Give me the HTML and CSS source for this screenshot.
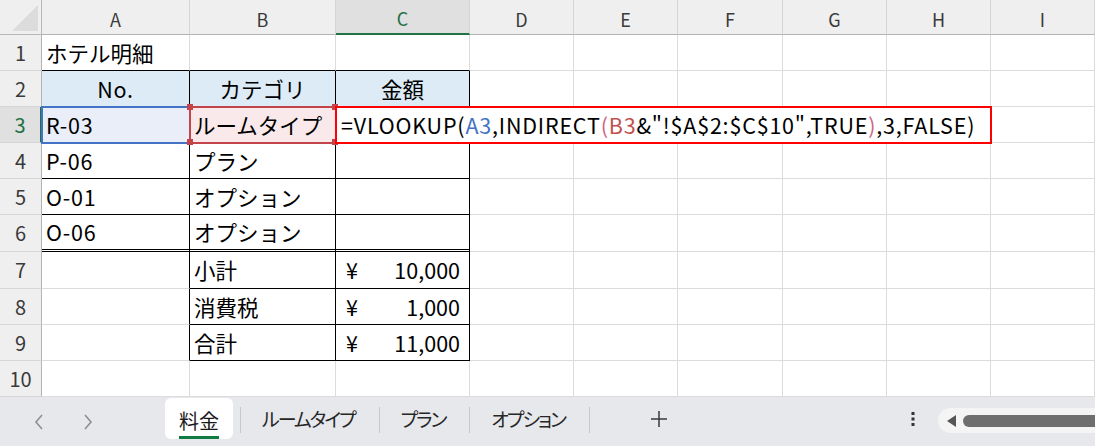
FILE: index.html
```html
<!DOCTYPE html>
<html lang="ja">
<head>
<meta charset="utf-8">
<link rel="stylesheet" href="styles.css">
</head>
<body>
<div class="sheet">
  <div class="corner"><svg width="41" height="34" viewBox="0 0 41 34"><polygon points="12,31 38,31 38,5" fill="#dcdcdc"/></svg></div>
  <div class="ch">A</div><div class="ch">B</div><div class="ch sel">C</div><div class="ch">D</div><div class="ch">E</div><div class="ch">F</div><div class="ch">G</div><div class="ch">H</div><div class="ch">I</div>

  <div class="rh">1</div>
  <div class="c bb">ホテル明細</div><div class="c bb"></div><div class="c bb"></div><div class="c"></div><div class="c"></div><div class="c"></div><div class="c"></div><div class="c"></div><div class="c"></div>

  <div class="rh">2</div>
  <div class="c hd br bb lat">No.</div><div class="c hd br bb">カテゴリ</div><div class="c hd br bb">金額</div><div class="c"></div><div class="c"></div><div class="c"></div><div class="c"></div><div class="c"></div><div class="c"></div>

  <div class="rh sel">3</div>
  <div class="c ref-a lat">R-03</div>
  <div class="c ref-b">ルームタイプ<span class="hdl tl"></span><span class="hdl tr"></span><span class="hdl bl"></span><span class="hdl br2"></span></div>
  <div class="c formula">=VLOOKUP(<span class="ra">A3</span>,INDIRECT<span class="p2">(</span><span class="rb">B3</span>&amp;"!$A$2:$C$10",TRUE<span class="p2">)</span>,3,FALSE)</div>
  <div class="c"></div>

  <div class="rh">4</div>
  <div class="c br bb lat">P-06</div><div class="c br bb">プラン</div><div class="c br bb"></div><div class="c"></div><div class="c"></div><div class="c"></div><div class="c"></div><div class="c"></div><div class="c"></div>

  <div class="rh">5</div>
  <div class="c br bb lat">O-01</div><div class="c br bb">オプション</div><div class="c br bb"></div><div class="c"></div><div class="c"></div><div class="c"></div><div class="c"></div><div class="c"></div><div class="c"></div>

  <div class="rh">6</div>
  <div class="c br dbl lat">O-06</div><div class="c br dbl">オプション</div><div class="c br dbl"></div><div class="c"></div><div class="c"></div><div class="c"></div><div class="c"></div><div class="c"></div><div class="c"></div>

  <div class="rh">7</div>
  <div class="c br"></div><div class="c br bb">小計</div><div class="c br bb money"><span>¥</span><span>10,000</span></div><div class="c"></div><div class="c"></div><div class="c"></div><div class="c"></div><div class="c"></div><div class="c"></div>

  <div class="rh">8</div>
  <div class="c br"></div><div class="c br bb">消費税</div><div class="c br bb money"><span>¥</span><span>1,000</span></div><div class="c"></div><div class="c"></div><div class="c"></div><div class="c"></div><div class="c"></div><div class="c"></div>

  <div class="rh">9</div>
  <div class="c br"></div><div class="c br bb">合計</div><div class="c br bb money"><span>¥</span><span>11,000</span></div><div class="c"></div><div class="c"></div><div class="c"></div><div class="c"></div><div class="c"></div><div class="c"></div>

  <div class="rh">10</div>
  <div class="c"></div><div class="c"></div><div class="c"></div><div class="c"></div><div class="c"></div><div class="c"></div><div class="c"></div><div class="c"></div><div class="c"></div>
</div>

<div class="tabbar">
  <div class="nav">
    <svg class="chev" width="10" height="16" viewBox="0 0 10 16"><polyline points="8,1 2,8 8,15" fill="none" stroke="#8f8f8f" stroke-width="1.6"/></svg>
    <svg class="chev" width="10" height="16" viewBox="0 0 10 16"><polyline points="2,1 8,8 2,15" fill="none" stroke="#8f8f8f" stroke-width="1.6"/></svg>
  </div>
  <div class="tab active"><span class="tlabel">料金</span></div>
  <div class="tab sep first">ルームタイプ</div>
  <div class="tab sep">プラン</div>
  <div class="tab sep">オプション</div>
  <div class="tab sep last"></div>
  <div class="plus"><svg width="18" height="18" viewBox="0 0 18 18"><path d="M9 1V17M1 9H17" stroke="#3a3a3a" stroke-width="1.5"/></svg></div>
  <div class="spacer"></div>
  <div class="more"><svg width="6" height="16" viewBox="0 0 6 16"><rect x="1.5" y="1" width="3" height="3" fill="#333"/><rect x="1.5" y="6.5" width="3" height="3" fill="#333"/><rect x="1.5" y="12" width="3" height="3" fill="#333"/></svg></div>
  <div class="scroll">
    <svg width="12" height="12" viewBox="0 0 12 12"><polygon points="10,0 10,12 1,6" fill="#555"/></svg>
    <div class="thumb"></div>
  </div>
</div>
</body>
</html>
```

FILE: styles.css
```css
* { box-sizing: border-box; }
body {
  margin: 0;
  width: 1095px;
  height: 446px;
  overflow: hidden;
  background: #fff;
  font-family: "Noto Sans CJK JP", sans-serif;
}
.sheet {
  display: grid;
  grid-template-columns: 42px 148px 146px 134px 104px 104px 105px 104px 104px 104px;
  grid-template-rows: 35px repeat(5, 36px) 37px 37px repeat(3, 36px);
}
.corner {
  background: #efefef;
  border-right: 1px solid #b8b8b8;
  border-bottom: 1px solid #b8b8b8;
}
.corner svg { display: block; }
.ch {
  background: #efefef;
  border-right: 1px solid #d4d4d4;
  border-bottom: 1px solid #b3b3b3;
  display: flex;
  align-items: center;
  justify-content: center;
  font-size: 18px;
  line-height: 1;
  color: #3a3a3a;
  padding-top: 3px;
}
.ch.sel {
  background: #e0e0e0;
  color: #1e7145;
  border-bottom: 2px solid #217346;
}
.rh {
  background: #efefef;
  border-right: 1px solid #b3b3b3;
  border-bottom: 1px solid #d6d6d6;
  display: flex;
  align-items: center;
  justify-content: center;
  font-size: 20px;
  line-height: 1;
  color: #3a3a3a;
}
.rh.sel {
  background: #e0e0e0;
  color: #1e7145;
  border-right: 2px solid #217346;
}
.c {
  border-right: 1px solid #dcdcdc;
  border-bottom: 1px solid #dcdcdc;
  display: flex;
  align-items: center;
  padding: 0 4px;
  font-size: 21.5px;
  line-height: 1;
  color: #000;
  white-space: nowrap;
}
.lat { letter-spacing: 0.8px; }
.bb { border-bottom-color: #000; }
.br { border-right-color: #000; }
.dbl { border-bottom: 3px double #000; }
.hd { background: #ddebf7; justify-content: center; }
.money { justify-content: space-between; padding: 0 9px 0 10px; }
.ref-a {
  position: relative;
  z-index: 1;
  background: #e9eef8;
  border-right-color: #000;
  outline: 2px solid #4472c4;
  outline-offset: -1px;
}
.ref-b {
  position: relative;
  z-index: 2;
  background: #f9e9ea;
  border-right-color: #000;
  outline: 2px solid #c4444b;
  outline-offset: -1px;
}
.hdl {
  position: absolute;
  width: 6px;
  height: 6px;
  background: #c4444b;
}
.hdl.tl { left: -3px; top: -3px; }
.hdl.tr { right: -3px; top: -3px; }
.hdl.bl { left: -3px; bottom: -3px; }
.hdl.br2 { right: -3px; bottom: -3px; }
.formula {
  grid-column: span 6;
  position: relative;
  z-index: 3;
  background: #fff;
  outline: 2px solid #ff0000;
  outline-offset: -1px;
  padding-left: 5px;
  letter-spacing: 0.8px;
}
.ra { color: #4472c4; }
.rb { color: #c0504d; }
.p2 { color: #cf6487; }

.tabbar {
  height: 49px;
  background: #e6e8ec;
  display: flex;
  align-items: flex-start;
}
.nav {
  width: 165px;
  height: 49px;
  display: flex;
  align-items: center;
  padding-left: 34px;
  gap: 39px;
}
.chev { display: block; }
.tab {
  height: 41px;
  margin-top: 1px;
  display: flex;
  align-items: center;
  font-size: 19px;
  line-height: 1;
  color: #262626;
  font-feature-settings: "palt";
  letter-spacing: -2px;
  white-space: nowrap;
}
.tab.active {
  width: 68px;
  background: #fff;
  border-radius: 6px;
  justify-content: center;
  color: #1a1a1a;
  font-size: 20px;
  letter-spacing: 0;
}
.tlabel {
  display: block;
  padding: 5px 0 5px;
  border-bottom: 3px solid #107c41;
  margin-top: 8px;
}
.tab.sep {
  padding: 0 24px 0 22px;
  position: relative;
}
.tab.sep.first { margin-left: 7px; }
.tab.sep::before {
  content: "";
  position: absolute;
  left: 0;
  top: 9px;
  height: 26px;
  border-left: 1px solid #c6c8cc;
}
.tab.last { padding: 0; width: 1px; }
.plus {
  margin-left: 60px;
  height: 49px;
  display: flex;
  align-items: center;
}
.plus svg { display: block; margin-top: -6px; }
.spacer { flex: 1; }
.more {
  height: 49px;
  display: flex;
  align-items: center;
  margin-right: 22px;
}
.more svg { display: block; margin-top: -5px; }
.scroll {
  width: 160px;
  height: 25px;
  margin-top: 11px;
  margin-right: -3px;
  background: #f4f4f4;
  border-radius: 13px 0 0 13px;
  display: flex;
  align-items: center;
  padding-left: 8px;
  gap: 5px;
  flex-shrink: 0;
}
.scroll svg { display: block; }
.thumb {
  flex: 1;
  height: 12px;
  background: #6e6e6e;
  border-radius: 6px 0 0 6px;
}
```
